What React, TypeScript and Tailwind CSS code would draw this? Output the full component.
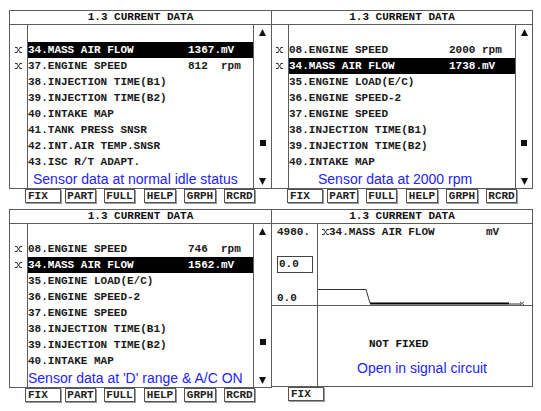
import React from 'react';

type Row = { label: string; value?: string; marked?: boolean; selected?: boolean };

const mono = "font-['Liberation_Mono',monospace] font-bold text-[11px]";
const sans = "font-['Liberation_Sans',Arial,sans-serif] text-[14px] text-[#2323ff]";

// little "x" marker in front of the fixed items
function Marker() {
  return (
    <svg width="7" height="6" viewBox="0 0 7 6" className="text-[#333]">
      <path
        d="M0 0.5h2.5M4.5 0.5h2.5M0 5.5h2.5M4.5 5.5h2.5M1.5 0.5l4 5M5.5 0.5l-4 5"
        stroke="currentColor"
        strokeWidth="1"
        fill="none"
      />
    </svg>
  );
}

function ScrollBar({ width }: { width: string }) {
  return (
    <div className={`${width} border-l border-[#5c5c5c] flex flex-col items-center pt-[4px]`}>
      <svg width="7" height="7" viewBox="0 0 7 7">
        <path d="M3.5 0L7 7H0Z" fill="#111" />
      </svg>
      <div className="mt-[104px] w-[6px] h-[6px] bg-[#111]" />
      <svg width="7" height="7" viewBox="0 0 7 7" className="mt-[32px]">
        <path d="M0 0H7L3.5 7Z" fill="#111" />
      </svg>
    </div>
  );
}

function Title() {
  return (
    <div className={`${mono} h-[14px] leading-[13px] text-center text-[#111] border-b border-[#5c5c5c]`}>
      1.3 CURRENT DATA
    </div>
  );
}

function ListPanel({
  rows,
  caption,
  captionPad,
  markerW,
  scrollW,
  className,
}: {
  rows: Row[];
  caption: string;
  captionPad: string;
  markerW: string;
  scrollW: string;
  className: string;
}) {
  return (
    <div className={`${className} h-[179px] border border-[#5c5c5c] bg-white flex flex-col`}>
      <Title />
      <div className="flex flex-1">
        <div className="flex-1 flex flex-col">
          <div className="flex h-[17px]">
            <div className={markerW} />
            <div className="flex-1 border-l border-[#5c5c5c]" />
          </div>
          {rows.map((r) => (
            <div key={r.label} className="flex h-[16px]">
              <div className={`${markerW} flex items-center justify-end pr-[5px]`}>
                {r.marked && <Marker />}
              </div>
              <div
                className={`flex-1 border-l border-[#5c5c5c] flex items-center whitespace-pre ${mono} ${
                  r.selected ? 'bg-black text-white' : 'text-[#1a1a1a]'
                }`}
              >
                <span className="w-[160px]">{r.label}</span>
                {r.value && <span>{r.value}</span>}
              </div>
            </div>
          ))}
          <div className="flex flex-1">
            <div className={markerW} />
            <div className={`flex-1 border-l border-[#5c5c5c] ${sans} leading-[18px] whitespace-nowrap ${captionPad}`}>
              {caption}
            </div>
          </div>
        </div>
        <ScrollBar width={scrollW} />
      </div>
    </div>
  );
}

function Buttons({ full = true }: { full?: boolean }) {
  const btn = `${mono} h-[14px] leading-[12px] border border-[#555] shadow-[1px_1px_0_#999] text-[#222] bg-white`;
  return (
    <div className="h-[20px] flex items-start pl-[16px]">
      <div className={`${btn} w-[36px] pl-[2px]`}>FIX</div>
      {full && (
        <>
          <div className={`${btn} ml-[4px] w-[31px] text-center`}>PART</div>
          <div className={`${btn} ml-[8px] w-[31px] text-center`}>FULL</div>
          <div className={`${btn} ml-[9px] w-[32px] text-center`}>HELP</div>
          <div className={`${btn} ml-[8px] w-[32px] text-center`}>GRPH</div>
          <div className={`${btn} ml-[8px] w-[31px] text-center`}>RCRD</div>
        </>
      )}
    </div>
  );
}

function GraphPanel() {
  return (
    <div className="w-[262px] -ml-px h-[178px] border border-[#5c5c5c] bg-white flex flex-col">
      <Title />
      <div className="flex h-[82px] border-b border-[#5c5c5c]">
        <div className={`w-[46px] border-r border-[#5c5c5c] pl-[5px] text-[#1a1a1a] ${mono}`}>
          <div className="h-[16px] leading-[16px]">4980.</div>
          <div className="mt-[16px] w-[36px] h-[17px] border border-[#444] leading-[15px] pl-[1px]">0.0</div>
          <div className="mt-[19px] h-[12px] leading-[12px]">0.0</div>
        </div>
        <div className="flex-1 relative">
          <div className={`flex items-center h-[16px] pl-[4px] text-[#1a1a1a] ${mono}`}>
            <Marker />
            <span className="w-[157px]">34.MASS AIR FLOW</span>
            <span>mV</span>
          </div>
          {/* signal trace: drops from idle level to zero */}
          <svg className="absolute left-0 top-0" width="213" height="81" viewBox="0 0 213 81">
            <path d="M0 65.5H48L52 79" stroke="#333" strokeWidth="1" fill="none" />
            <path d="M52 79.5H191" stroke="#000" strokeWidth="2" fill="none" />
            <path d="M191 80H203" stroke="#333" strokeWidth="1" fill="none" />
            <path d="M202 78l4 3M206 78l-4 3" stroke="#555" strokeWidth="1" fill="none" />
          </svg>
        </div>
      </div>
      <div className="flex flex-1">
        <div className="w-[46px] border-r border-[#5c5c5c]" />
        <div className="flex-1">
          <div className={`pt-[30px] pl-[51px] h-[46px] leading-[16px] text-[#111] ${mono}`}>NOT FIXED</div>
          <div className={`mt-[8px] pl-[39px] leading-[16px] ${sans}`}>Open in signal circuit</div>
        </div>
      </div>
    </div>
  );
}

const idleRows: Row[] = [
  { label: '34.MASS AIR FLOW', value: '1367.mV', marked: true, selected: true },
  { label: '37.ENGINE SPEED', value: '812  rpm', marked: true },
  { label: '38.INJECTION TIME(B1)' },
  { label: '39.INJECTION TIME(B2)' },
  { label: '40.INTAKE MAP' },
  { label: '41.TANK PRESS SNSR' },
  { label: '42.INT.AIR TEMP.SNSR' },
  { label: '43.ISC R/T ADAPT.' },
];

const tail: Row[] = [
  { label: '35.ENGINE LOAD(E/C)' },
  { label: '36.ENGINE SPEED-2' },
  { label: '37.ENGINE SPEED' },
  { label: '38.INJECTION TIME(B1)' },
  { label: '39.INJECTION TIME(B2)' },
  { label: '40.INTAKE MAP' },
];

const rpmRows: Row[] = [
  { label: '08.ENGINE SPEED', value: '2000 rpm', marked: true },
  { label: '34.MASS AIR FLOW', value: '1738.mV', marked: true, selected: true },
  ...tail,
];

const driveRows: Row[] = [
  { label: '08.ENGINE SPEED', value: '746  rpm', marked: true },
  { label: '34.MASS AIR FLOW', value: '1562.mV', marked: true, selected: true },
  ...tail,
];

export default function App() {
  return (
    <div className="w-[541px] h-[411px] bg-white pt-[10px] pl-[9px] overflow-hidden">
      <div className="flex">
        <div>
          <ListPanel
            rows={idleRows}
            caption="Sensor data at normal idle status"
            captionPad="pl-[5px]"
            markerW="w-[17px]"
            scrollW="w-[18px]"
            className="w-[263px]"
          />
          <Buttons />
        </div>
        <div className="-ml-px">
          <ListPanel
            rows={rpmRows}
            caption="Sensor data at 2000 rpm"
            captionPad="pl-[29px]"
            markerW="w-[16px]"
            scrollW="w-[17px]"
            className="w-[262px]"
          />
          <Buttons />
        </div>
      </div>
      <div className="flex">
        <div>
          <ListPanel
            rows={driveRows}
            caption="Sensor data at 'D' range & A/C ON"
            captionPad="pl-0"
            markerW="w-[17px]"
            scrollW="w-[18px]"
            className="w-[263px]"
          />
          <Buttons />
        </div>
        <div>
          <GraphPanel />
          <Buttons full={false} />
        </div>
      </div>
    </div>
  );
}
